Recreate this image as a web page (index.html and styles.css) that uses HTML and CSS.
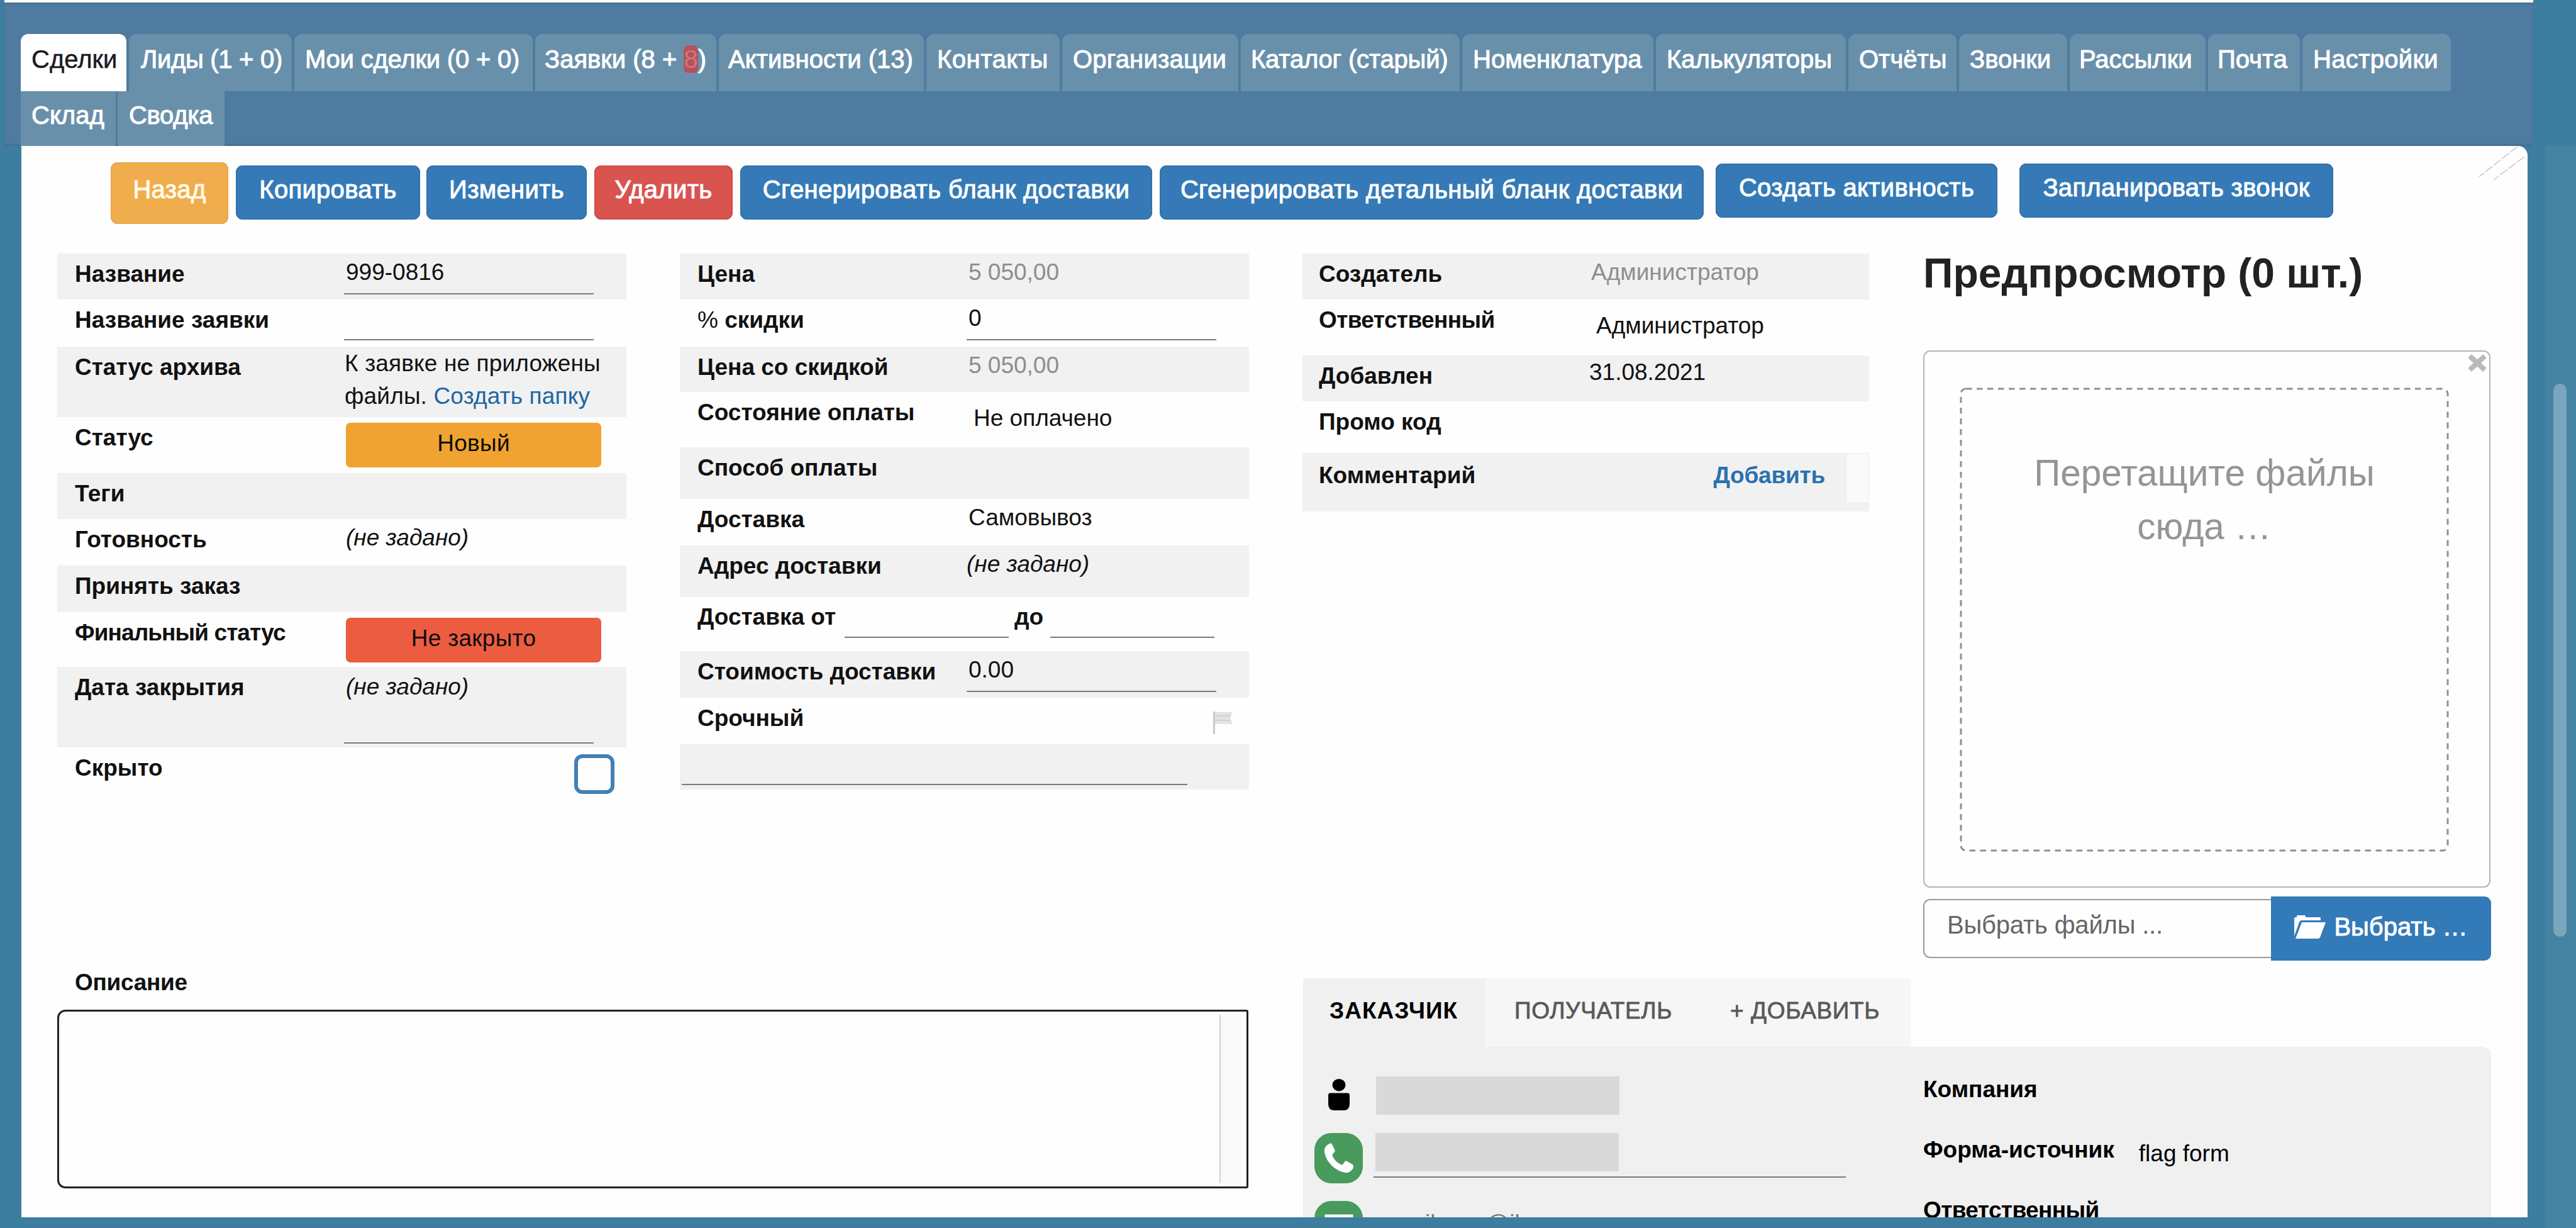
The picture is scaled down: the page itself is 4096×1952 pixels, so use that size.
FILE: index.html
```html
<!DOCTYPE html>
<html lang="ru">
<head>
    <meta charset="UTF-8">
    <title>Сделки</title>
    <link rel="stylesheet" href="styles.css">
</head>
<body>
    <header class="header">
        <nav class="tabs">
            <a class="tab active">Сделки</a>
            <a class="tab">Лиды (1 + 0)</a>
            <a class="tab">Мои сделки (0 + 0)</a>
            <a class="tab">Заявки (8 + <span class="hot">8</span>)</a>
            <a class="tab">Активности (13)</a>
            <a class="tab">Контакты</a>
            <a class="tab">Организации</a>
            <a class="tab">Каталог (старый)</a>
            <a class="tab">Номенклатура</a>
            <a class="tab">Калькуляторы</a>
            <a class="tab">Отчёты</a>
            <a class="tab">Звонки</a>
            <a class="tab">Рассылки</a>
            <a class="tab">Почта</a>
            <a class="tab">Настройки</a>
        </nav>
        <nav class="tabs second">
            <a class="tab">Склад</a>
            <a class="tab">Сводка</a>
        </nav>
    </header>

    <div class="page">
        <main class="panel">
            <svg class="corner" width="80" height="60" viewBox="0 0 80 60">
                <path d="M64 1 L3 49 M75 17 L26 54" />
            </svg>

            <div class="toolbar">
                <button class="btn back">Назад</button>
                <button class="btn copy">Копировать</button>
                <button class="btn edit">Изменить</button>
                <button class="btn remove">Удалить</button>
                <button class="btn blank">Сгенерировать бланк доставки</button>
                <button class="btn detail">Сгенерировать детальный бланк доставки</button>
                <button class="btn activity">Создать активность</button>
                <button class="btn call">Запланировать звонок</button>
            </div>

            <div class="columns">
                <div class="col deal">
                    <div class="row"><b>Название</b><div class="field">999-0816</div></div>
                    <div class="row"><b>Название заявки</b><div class="field"></div></div>
                    <div class="row"><b>Статус архива</b><div class="value archive">К заявке не приложены<br>файлы. <a class="link">Создать папку</a></div></div>
                    <div class="row"><b>Статус</b><div class="status new">Новый</div></div>
                    <div class="row"><b>Теги</b></div>
                    <div class="row"><b>Готовность</b><div class="value empty">(не задано)</div></div>
                    <div class="row"><b>Принять заказ</b></div>
                    <div class="row"><b class="tight">Финальный статус</b><div class="status open">Не закрыто</div></div>
                    <div class="row"><b>Дата закрытия</b><div class="field tall empty">(не задано)</div></div>
                    <div class="row"><b>Скрыто</b><span class="checkbox"></span></div>
                </div>

                <div class="col price">
                    <div class="row"><b>Цена</b><div class="value muted">5 050,00</div></div>
                    <div class="row"><b><span class="thin">%</span> скидки</b><div class="field">0</div></div>
                    <div class="row"><b>Цена со скидкой</b><div class="value muted">5 050,00</div></div>
                    <div class="row"><b>Состояние оплаты</b><div class="value select">Не оплачено</div></div>
                    <div class="row"><b>Способ оплаты</b></div>
                    <div class="row"><b>Доставка</b><div class="value">Самовывоз</div></div>
                    <div class="row"><b>Адрес доставки</b><div class="value empty address">(не задано)</div></div>
                    <div class="row range"><b>Доставка от</b><i class="from"></i><b class="to">до</b><i></i></div>
                    <div class="row"><b>Стоимость доставки</b><div class="field">0.00</div></div>
                    <div class="row">
                        <b>Срочный</b>
                        <svg class="flag" width="32" height="36" viewBox="0 0 32 36">
                            <path class="pole" d="M1.5 0V36" />
                            <path d="M3 1H31L27 10L31 20H3Z" />
                            <path class="stripe" d="M3 7H27M3 14H27" />
                        </svg>
                    </div>
                    <div class="row"><div class="wide-field"></div></div>
                </div>

                <div class="col author">
                    <div class="row"><b>Создатель</b><div class="value muted">Администратор</div></div>
                    <div class="row"><b class="tight">Ответственный</b><div class="value select">Администратор</div></div>
                    <div class="row"><b>Добавлен</b><div class="value date">31.08.2021</div></div>
                    <div class="row"><b>Промо код</b></div>
                    <div class="row comment"><b>Комментарий</b><a class="add">Добавить</a><span class="scroll"></span></div>
                </div>

                <div class="preview">
                    <h2>Предпросмотр (0 шт.)</h2>
                    <div class="drop-box">
                        <svg class="close" width="32" height="30" viewBox="0 0 32 30">
                            <path d="M4 4L28 26M28 4L4 26" />
                        </svg>
                        <svg class="dashes" width="778" height="738" viewBox="0 0 778 738">
                            <rect x="2" y="2" width="774" height="734" rx="8" />
                        </svg>
                        <div class="drop-zone">Перетащите файлы<br>сюда …</div>
                    </div>
                    <div class="file-input">
                        <div class="file-name">Выбрать файлы ...</div>
                        <button class="browse">
                            <svg width="50" height="38" viewBox="0 0 50 38">
                                <path d="M0 34V6Q0 4 2 4H4V1H18V4H40Q42 4 42 6V9H12Q9 9 8 12Z" />
                                <path d="M12 12H50L41 36Q40 38 38 38H2Z" />
                            </svg>
                            <span>Выбрать …</span>
                        </button>
                    </div>
                </div>
            </div>

            <div class="bottom">
                <section class="description">
                    <b>Описание</b>
                    <div class="textarea"><span class="track"></span></div>
                </section>

                <section class="contacts">
                    <div class="contact-tabs">
                        <a class="current">ЗАКАЗЧИК</a>
                        <a class="receiver">ПОЛУЧАТЕЛЬ</a>
                        <a class="plus">+ ДОБАВИТЬ</a>
                    </div>
                    <div class="contact-card">
                        <div class="contact-left">
                            <div class="contact-row person">
                                <svg width="34" height="50" viewBox="0 0 34 50">
                                    <ellipse cx="17" cy="9.7" rx="10.5" ry="9.7" />
                                    <path d="M0 26Q0 22.500 3 22.500H31Q34 22.500 34 26V40Q34 50 24 50H10Q0 50 0 40Z" />
                                </svg>
                                <span class="hidden-text"></span>
                            </div>
                            <div class="contact-row phone">
                                <span class="badge">
                                    <svg width="48" height="48" viewBox="0 0 48 48">
                                        <path d="M9 1C4 3 0 8 1 14C3 29 17 44 34 47C40 48 47 43 47 37C47 35 46 34 44 33L37 29C35 28 34 28 33 30L30 34C29 35 28 35 27 34C21 31 17 27 14 21C13 20 13 19 14 18L17 14C18 13 18 12 17 10L13 2C12 0 11 0 9 1Z" />
                                    </svg>
                                </span>
                                <div class="phone-field"><span class="hidden-text"></span></div>
                            </div>
                            <div class="contact-row mail">
                                <span class="badge">
                                    <svg width="46" height="38" viewBox="0 0 46 38">
                                        <path d="M3 3H43V35H3ZM3 5L23 22L43 5" />
                                    </svg>
                                </span>
                                <span class="email">email.com@il</span>
                            </div>
                        </div>
                        <div class="contact-right">
                            <div><b>Компания</b></div>
                            <div><b>Форма-источник</b><span>flag form</span></div>
                            <div><b class="tight">Ответственный</b></div>
                        </div>
                    </div>
                </section>
            </div>
        </main>
        <div class="scrollbar"><div class="thumb"></div></div>
    </div>
</body>
</html>
```
FILE: styles.css
```css
* {
    box-sizing: border-box;
}

body {
    margin: 0;
    width: 4096px;
    height: 1952px;
    overflow: hidden;
    background-color: #3d7d9f;
    font-family: "Liberation Sans", Arial, sans-serif;
    font-size: 37px;
    line-height: 53px;
    color: #111;
}

button {
    font-family: inherit;
    border: none;
    padding: 0;
}

/* top menu */
.header {
    width: 4021px;
    height: 232px;
    margin-left: 7px;
    padding: 50px 0 0 26px;
    border-top: 4px solid #fbfefe;
    background-color: #4e7b9f;
    box-shadow: inset 0 3px 3px -1px #456a8c, inset 0 -3px 3px -1px #456a8c;
}

.tabs {
    display: flex;
    gap: 4px;
    height: 91px;
}

.tabs.second {
    height: 87px;
    gap: 3px;
}

.tab {
    padding: 12px 0 0 17px;
    border-radius: 12px 12px 0 0;
    background-color: #6990ab;
    color: #fff;
    font-size: 40px;
    line-height: 57px;
    white-space: nowrap;
    -webkit-text-stroke: 1px currentColor;
}

.second .tab {
    padding-top: 10px;
    border-radius: 0;
}

.tab.active {
    background-color: #fff;
    color: #1a1a24;
    -webkit-text-stroke: 0.5px currentColor;
}

.tab .hot {
    color: #c9787c;
    background-color: #b9505a;
    border-radius: 8px;
    -webkit-text-stroke: 0;
}

.tab:nth-child(1) { width: 168px; }
.tab:nth-child(2) { width: 259px; padding-left: 19px; letter-spacing: -0.3px; }
.tab:nth-child(3) { width: 379px; letter-spacing: -0.2px; }
.tab:nth-child(4) { width: 288px; padding-left: 15px; }
.tab:nth-child(5) { width: 326px; padding-left: 15px; }
.tab:nth-child(6) { width: 212px; letter-spacing: 0.5px; }
.tab:nth-child(7) { width: 280px; letter-spacing: 0.2px; }
.tab:nth-child(8) { width: 348px; padding-left: 16px; letter-spacing: -0.2px; }
.tab:nth-child(9) { width: 304px; }
.tab:nth-child(10) { width: 302px; }
.tab:nth-child(11) { width: 172px; }
.tab:nth-child(12) { width: 172px; }
.tab:nth-child(13) { width: 216px; padding-left: 15px; }
.tab:nth-child(14) { width: 146px; padding-left: 15px; }
.tab:nth-child(15) { width: 236px; letter-spacing: 0.3px; }
.second .tab:nth-child(1) { width: 151px; }
.second .tab:nth-child(2) { width: 170px; padding-left: 18px; }

.page {
    display: flex;
    height: 1703px;
}

.panel {
    position: relative;
    flex: none;
    width: 3985px;
    height: 1703px;
    margin-left: 34px;
    background-color: #fefefe;
    border-top-right-radius: 15px;
    overflow: hidden;
}

.corner {
    position: absolute;
    top: 0;
    right: 0;
    fill: none;
    stroke: #c4c4c4;
    stroke-width: 1.5;
    stroke-dasharray: 14 3;
}

.scrollbar {
    width: 49px;
    height: 1720px;
    margin-left: 28px;
    padding: 378px 0 0 13px;
    background-color: #4583a3;
}

.thumb {
    width: 21px;
    height: 879px;
    border-radius: 11px;
    background-color: #7aa5bd;
}

/* action buttons */
.toolbar {
    display: flex;
    align-items: flex-start;
    height: 171px;
    padding: 31px 0 0 142px;
}

.btn {
    flex: none;
    height: 86px;
    padding-bottom: 9px;
    border-radius: 11px;
    background-color: #357ab7;
    box-shadow: inset 0 0 2px 1px #2e6a9f;
    color: #fff;
    font-size: 40px;
    letter-spacing: 0.3px;
    white-space: nowrap;
    -webkit-text-stroke: 1px currentColor;
}

.btn.back {
    width: 187px;
    height: 98px;
    margin: -5px 12px 0 0;
    padding-bottom: 12px;
    background-color: #f0ad4e;
    box-shadow: inset 0 0 2px 1px #e3a044;
    color: #fffbe8;
}

.btn.copy { width: 293px; margin-right: 10px; }
.btn.edit { width: 255px; margin-right: 12px; }
.btn.remove { width: 220px; margin-right: 12px; background-color: #d9534f; box-shadow: inset 0 0 2px 1px #c44743; }
.btn.blank { width: 655px; margin-right: 12px; }
.btn.detail { width: 865px; margin-right: 19px; }
.btn.activity { width: 448px; margin: -3px 35px 0 0; }
.btn.call { width: 499px; margin-top: -3px; }

/* property columns */
.columns {
    display: grid;
    grid-template-columns: 905px 905px 901px 904px;
    column-gap: 85px;
    height: 1152px;
    padding-left: 57px;
}

.col {
    display: grid;
    align-content: start;
}

.deal {
    grid-template-rows: 73px 75px 112px 89px 73px 74px 74px 87px 128px 81px;
}

.price {
    grid-template-rows: 73px 75px 72px 88px 82px 74px 82px 86px 74px 74px 72px;
}

.author {
    grid-template-rows: 73px 89px 73px 82px 93px;
}

.row {
    display: grid;
    grid-template-columns: 456px 1fr;
    align-items: start;
    white-space: nowrap;
}

.row:nth-child(odd) {
    background-color: #f1f1f1;
}

.row b {
    padding: 6px 0 0 28px;
}

.tight {
    letter-spacing: -0.6px;
}

.deal .tight {
    letter-spacing: -0.9px;
}

.thin {
    font-weight: normal;
}

.value {
    padding: 3px 0 0 3px;
}

.value.muted {
    color: #8e8e8e;
}

.value.select {
    padding: 15px 0 0 11px;
}

.value.archive {
    line-height: 52px;
    padding: 1px 0 0 1px;
    letter-spacing: 0.15px;
}

.value.date {
    padding: 0;
}

.empty {
    font-style: italic;
}

.value.address {
    padding-left: 0;
}

.link {
    color: #1d66a3;
}

.field {
    width: 397px;
    height: 65px;
    padding: 3px 0 0 3px;
    border-bottom: 2px solid #7c7a7c;
}

.field.tall {
    height: 122px;
    padding-top: 5px;
}

.status {
    width: 406px;
    height: 71px;
    margin: 9px 0 0 3px;
    padding-top: 6px;
    border-radius: 7px;
    text-align: center;
    color: #0c0c0c;
    letter-spacing: 0.3px;
}

.status.new {
    background-color: #f0a330;
}

.status.open {
    background-color: #ec5c40;
}

.checkbox {
    width: 64px;
    height: 63px;
    margin: 11px 0 0 366px;
    border: 6px solid #4280b4;
    border-radius: 13px;
}

.row.range {
    display: flex;
    padding-right: 55px;
}

.range b {
    padding-top: 5px;
}

.range b.to {
    padding: 5px 11px 0 9px;
}

.range i {
    width: 261px;
    height: 65px;
    border-bottom: 2px solid #7c7a7c;
}

.range .from {
    margin-left: auto;
}

.flag {
    margin: 22px 0 0 392px;
    fill: #e3e3e5;
}

.flag .pole {
    stroke: #c9c9cc;
    stroke-width: 3;
}

.flag .stripe {
    stroke: #cfcfd3;
    stroke-width: 2;
}

.wide-field {
    width: 804px;
    height: 65px;
    margin-left: 3px;
    border-bottom: 2px solid #7c7a7c;
}

.author .row b {
    padding-left: 26px;
}

.row.comment {
    display: flex;
}

.comment b,
.comment .add {
    padding-top: 9px;
}

.add {
    margin-left: auto;
    margin-right: 33px;
    font-weight: bold;
    color: #2a71ae;
    letter-spacing: -0.2px;
}

.scroll {
    width: 37px;
    height: 80px;
    background-color: #fafafa;
    border: 1px solid #ececec;
}

/* file preview */
.preview {
    padding-left: 1px;
}

.preview h2 {
    margin: -6px 0 0;
    font-size: 66px;
    line-height: 75px;
    color: #222;
    white-space: nowrap;
}

.drop-box {
    position: relative;
    width: 902px;
    height: 854px;
    margin-top: 85px;
    padding: 57px 0 0 56px;
    border: 2px solid #b4b4b4;
    border-radius: 11px;
}

.close {
    position: absolute;
    top: 3px;
    right: 3px;
    stroke: #b9b9b9;
    stroke-width: 8;
}

.dashes {
    position: absolute;
    top: 57px;
    left: 56px;
    fill: none;
    stroke: #909090;
    stroke-width: 3;
    stroke-dasharray: 9.5 7.5;
}

.drop-zone {
    width: 778px;
    height: 738px;
    padding-top: 93px;
    text-align: center;
    font-size: 58.5px;
    line-height: 85px;
    color: #969496;
}

.file-input {
    display: flex;
    align-items: center;
    height: 102px;
    margin-top: 14px;
}

.file-name {
    width: 554px;
    height: 94px;
    padding: 13px 0 0 36px;
    border: 2px solid #9a9a9a;
    border-right: none;
    border-radius: 11px 0 0 11px;
    font-size: 40px;
    letter-spacing: -0.2px;
    color: #666;
    white-space: nowrap;
}

.browse {
    display: flex;
    align-items: center;
    gap: 13px;
    width: 350px;
    height: 102px;
    padding: 0 0 6px 37px;
    border-radius: 0 11px 11px 0;
    background-color: #327ab8;
    color: #fff;
    font-size: 40px;
    white-space: nowrap;
    -webkit-text-stroke: 1px currentColor;
}

.browse svg {
    fill: #fff;
}

/* description and contacts */
.bottom {
    display: flex;
    padding-left: 57px;
}

.description {
    width: 1896px;
    margin-right: 85px;
}

.description b {
    display: block;
    height: 70px;
    margin-top: -20px;
    padding-left: 28px;
    letter-spacing: -0.3px;
}

.textarea {
    display: flex;
    justify-content: flex-end;
    width: 1894px;
    height: 284px;
    padding: 5px 8px 5px 0;
    border: 3px solid #222;
    border-radius: 13px 3px 3px 13px;
}

.track {
    width: 35px;
    background-color: #f9f9f9;
    border-left: 2px solid #d2d2d2;
}

.contacts {
    width: 1890px;
}

.contact-tabs {
    display: flex;
    width: 966px;
    height: 109px;
    background-color: #f6f6f6;
    color: #5a585a;
    white-space: nowrap;
    -webkit-text-stroke: 0.8px currentColor;
}

.contact-tabs a {
    padding: 25px 0 0 46px;
    letter-spacing: 0.6px;
}

.contact-tabs .current {
    width: 290px;
    padding-left: 42px;
    background-color: #f0f0f0;
    font-weight: bold;
    letter-spacing: 1px;
    color: #000;
    -webkit-text-stroke: 0;
}

.contact-tabs .receiver {
    width: 343px;
}

.contact-card {
    display: flex;
    width: 1889px;
    height: 300px;
    background-color: #f0f0f0;
    border-top-right-radius: 14px;
    color: #000;
}

.contact-left {
    width: 986px;
    padding: 47px 0 0 18px;
}

.contact-row {
    display: flex;
    align-items: flex-start;
}

.person {
    height: 90px;
    padding-left: 22px;
}

.person svg {
    margin: 4px 42px 0 0;
}

.hidden-text {
    display: block;
    width: 387px;
    height: 61px;
    background-color: #d9d9d9;
}

.badge {
    display: flex;
    align-items: center;
    justify-content: center;
    width: 77px;
    height: 80px;
    margin-right: 17px;
    border-radius: 27px;
    background-color: #489b5d;
}

.phone svg {
    fill: #fff;
}

.phone {
    height: 108px;
}

.phone-field {
    width: 751px;
    height: 71px;
    padding-left: 3px;
    border-bottom: 2px solid #7c7a7c;
}

.mail svg {
    fill: none;
    stroke: #fff;
    stroke-width: 5;
}

.email {
    padding: 9px 0 0 10px;
    color: #777;
}

.contact-right {
    padding-top: 41px;
}

.contact-right div {
    display: flex;
    height: 96px;
    white-space: nowrap;
}

.contact-right span {
    padding: 6px 0 0 39px;
}
```
